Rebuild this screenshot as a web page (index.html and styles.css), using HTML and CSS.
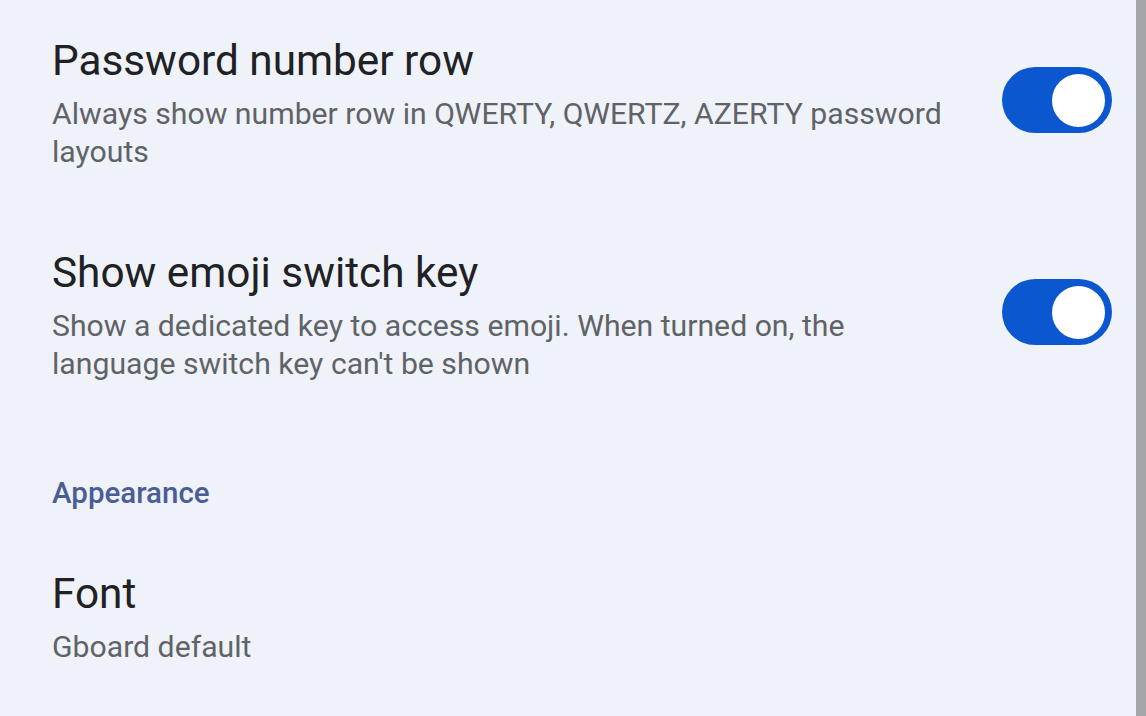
FILE: index.html
```html
<!DOCTYPE html>
<html>
<head>
<meta charset="utf-8">
<link rel="stylesheet" href="styles.css">
</head>
<body>
<div class="screen">
  <main class="content">
    <div class="item item-first">
      <div class="text">
        <div class="title">Password number row</div>
        <div class="sub">Always show number row in QWERTY, QWERTZ, AZERTY password layouts</div>
      </div>
      <div class="switch"><div class="knob"></div></div>
    </div>
    <div class="item item-second">
      <div class="text">
        <div class="title">Show emoji switch key</div>
        <div class="sub">Show a dedicated key to access emoji. When turned on, the language switch key can't be shown</div>
      </div>
      <div class="switch"><div class="knob"></div></div>
    </div>
    <div class="section">Appearance</div>
    <div class="item item-font">
      <div class="text">
        <div class="title">Font</div>
        <div class="sub">Gboard default</div>
      </div>
    </div>
  </main>
  <div class="scrollbar"></div>
</div>
</body>
</html>
```

FILE: styles.css
```css
html, body {
  margin: 0;
  padding: 0;
  height: 100%;
}
body {
  background: #eff2f8;
  font-family: Roboto, "Liberation Sans", sans-serif;
  overflow: hidden;
}
.screen {
  display: flex;
  width: 1146px;
  height: 716px;
}
.content {
  flex: 1;
  padding-left: 52px;
  padding-right: 24px;
  display: flex;
  flex-direction: column;
}
.scrollbar {
  width: 10px;
  background: #a3a5a8;
}
.item {
  display: flex;
  align-items: center;
  justify-content: space-between;
}
.item-first {
  margin-top: 35px;
}
.item-second {
  margin-top: 76px;
}
.text {
  width: 905px;
}
.title {
  font-size: 42.3px;
  color: #202124;
  line-height: 52px;
}
.sub {
  font-size: 30.2px;
  line-height: 38px;
  color: #5f6368;
  margin-top: 8px;
}
.switch {
  width: 110px;
  height: 66px;
  margin-bottom: 6px;
  border-radius: 33px;
  background: #0b57d0;
  display: flex;
  align-items: center;
  justify-content: flex-end;
  padding-right: 7px;
  box-sizing: border-box;
  flex-shrink: 0;
}
.knob {
  width: 53px;
  height: 53px;
  border-radius: 50%;
  background: #ffffff;
}
.section {
  margin-top: 91px;
  font-size: 29.5px;
  font-weight: 500;
  color: #4b5d96;
  line-height: 38px;
}
.item-font {
  margin-top: 56px;
}
```
